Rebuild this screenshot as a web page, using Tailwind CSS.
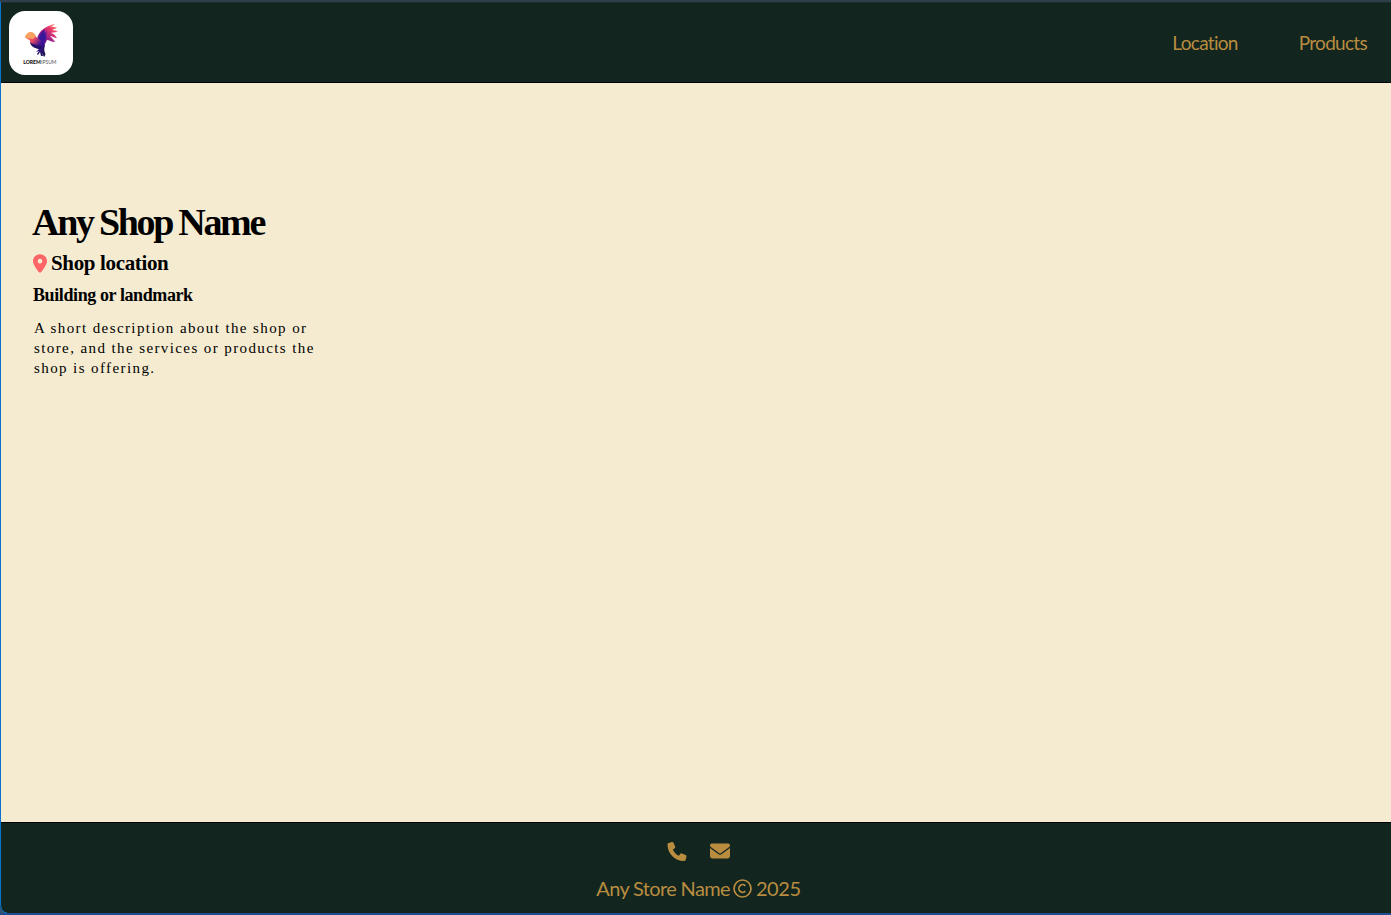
<!DOCTYPE html>
<html lang="en">
<head>
<meta charset="utf-8">
<title>Any Shop Name</title>
<script src="https://cdn.jsdelivr.net/npm/@tailwindcss/browser@4"></script>
</head>
<body class="h-[915px] overflow-hidden bg-[#12261f]">
<div class="relative flex h-[915px] flex-col border-t-2 border-[#2e3e4a] bg-[#12261f]">
  <header class="flex h-[81px] shrink-0 items-center justify-between border-t border-b border-t-[#1b2c2d] border-b-black pr-6 pl-[9px] font-['Lato',sans-serif] text-[19px] text-[#b98c3f]">
    <a class="flex size-16 items-center justify-center rounded-[16px] bg-white">
      <svg class="size-16" viewBox="0 0 64 64">
        <defs>
          <linearGradient id="w" x1="0" y1="1" x2="1" y2="0"><stop offset="0" stop-color="#351090"/><stop offset=".4" stop-color="#8d1b91"/><stop offset=".7" stop-color="#e83a6c"/><stop offset="1" stop-color="#ff8b52"/></linearGradient>
          <linearGradient id="b" x1="0" y1="0" x2="1" y2="1"><stop offset="0" stop-color="#ff9f5b"/><stop offset=".35" stop-color="#ec4a63"/><stop offset=".6" stop-color="#421397"/><stop offset="1" stop-color="#121642"/></linearGradient>
        </defs>
        <path d="M28 28C30 19 37 15 46 13C44 15 42 15 41 16C44 15 46 17 48 16C47 18 44 18 43 19C45 19 47 20 49 20C46 22 44 21 42 22C44 22 47 25 48 27C45 27 43 25 41 25C43 27 45 29 46 31C42 31 40 29 38 29L35 35L27 33Z" fill="url(#w)"/>
        <path d="M31 25C32 21 34 20 36 18L35 23L38 20L36 26L38 24L36 30L34 34L29 30Z" fill="#37169b"/>
        <path d="M16 26C19 20 25 20 27 26C30 28 35 31 36 35C35 37 35 39 36 42C37 43 36 45 35 46L33 42L34 45H32L31 41L29 44L28 43L30 40L27 41L30 38C25 37 21 35 21 30C21 28 18 29 16 26Z" fill="url(#b)"/>
        <path d="M21 31C24 34 29 33 35 37L30 38C25 37 22 35 21 31Z" fill="#231269"/>
        <path d="M16 26C18 20 24 19 27 25L24 28C21 27 19 28 16 26Z" fill="#f7a25e"/>
        <text x="14.2" y="53" font-family="Lato" font-size="5" font-weight="900" textLength="17.5" lengthAdjust="spacingAndGlyphs" fill="#111">LOREM</text>
        <text x="32" y="53" font-family="Lato" font-size="5" textLength="15.5" lengthAdjust="spacingAndGlyphs" fill="#555">IPSUM</text>
      </svg>
    </a>
    <nav class="flex gap-[61px] pt-0.5 tracking-[-0.7px]"><a>Location</a><a>Products</a></nav>
  </header>
  <main class="h-[739px] shrink-0 bg-[#f5ebd0] pt-[115px] pl-8 text-black">
    <h1 class="h-[49px] font-['Liberation_Serif',serif] text-[38px] leading-[48px] font-bold tracking-[-2.3px] [word-spacing:-1px] whitespace-nowrap">Any Shop Name</h1>
    <h2 class="flex h-[32px] items-center gap-[4px] pl-px font-['Liberation_Serif',serif] text-[21px] leading-[32px] font-bold tracking-[-0.35px] whitespace-nowrap">
      <svg class="h-[19px] w-[14px]" viewBox="0 0 384 512" fill="#ff6467"><path d="M215.7 499.2C267 435 384 279.4 384 192C384 86 298 0 192 0S0 86 0 192c0 87.4 117 243 168.3 307.2c12.3 15.3 35.1 15.3 47.4 0zM192 128a64 64 0 1 1 0 128 64 64 0 1 1 0-128z"/></svg>
      <span>Shop location</span></h2>
    <h3 class="h-[32px] pl-px font-['Liberation_Serif',serif] text-[18px] leading-[32px] font-bold tracking-[-0.4px] whitespace-nowrap">Building or landmark</h3>
    <p class="mt-[7px] ml-[2px] font-['Liberation_Serif',serif] text-[15px] leading-5 tracking-[1.4px] whitespace-nowrap">A short description about the shop or<br>store, and the services or products the<br>shop is offering.</p>
  </main>
  <footer class="flex h-[93px] shrink-0 flex-col items-center border-t border-b-2 border-t-black border-b-[#204f91] pt-[18px] pl-[6px] font-['Lato',sans-serif] text-[#b98c3f]">
    <div class="flex h-5 items-center gap-[23px]">
      <svg class="h-[19px] w-5" viewBox="0 0 512 512" fill="currentColor"><path d="M164.9 24.6c-7.7-18.6-28-28.5-47.4-23.2l-88 24C12.1 30.2 0 46 0 64C0 311.4 200.6 512 448 512c18 0 33.8-12.1 38.6-29.5l24-88c5.3-19.4-4.6-39.7-23.2-47.4l-96-40c-16.3-6.8-35.2-2.1-46.3 11.6L304.7 368C234.3 334.7 177.3 277.7 144 207.3L193.3 167c13.7-11.2 18.4-30 11.6-46.3l-40-96z"/></svg>
      <svg class="size-5" viewBox="0 0 512 512" fill="currentColor"><path d="M48 64C21.5 64 0 85.5 0 112c0 15.1 7.1 29.3 19.2 38.4L236.8 313.6c11.4 8.5 27 8.5 38.4 0L492.8 150.4c12.1-9.1 19.2-23.3 19.2-38.4c0-26.5-21.5-48-48-48L48 64zM0 176L0 384c0 35.3 28.7 64 64 64l384 0c35.3 0 64-28.7 64-64l0-208L294.4 339.2c-22.8 17.1-54 17.1-76.8 0L0 176z"/></svg>
    </div>
    <div class="mt-[11px] flex h-8 items-center gap-[3.5px] text-[20px] leading-8 tracking-[-0.65px] whitespace-nowrap"><span>Any Store Name</span>
      <svg class="size-[19px]" viewBox="0 0 19 19" fill="none" stroke="currentColor" stroke-width="1.7"><circle cx="9.5" cy="9.5" r="8.5"/><path d="M12.3 12.2A3.8 3.8 0 1 1 12.3 6.8"/></svg>
      <span class="tracking-[-0.4px]">2025</span></div>
  </footer>
  <svg class="absolute top-[-2px] left-0 h-[915px] w-2" viewBox="0 0 8 915" fill="none"><path d="M0 906v7h7Q2 912 0 906Z" fill="#355369"/><path d="M.5 2V905Q1 912 7 913" stroke="#0874cf"/></svg>
</div>
</body>
</html>
